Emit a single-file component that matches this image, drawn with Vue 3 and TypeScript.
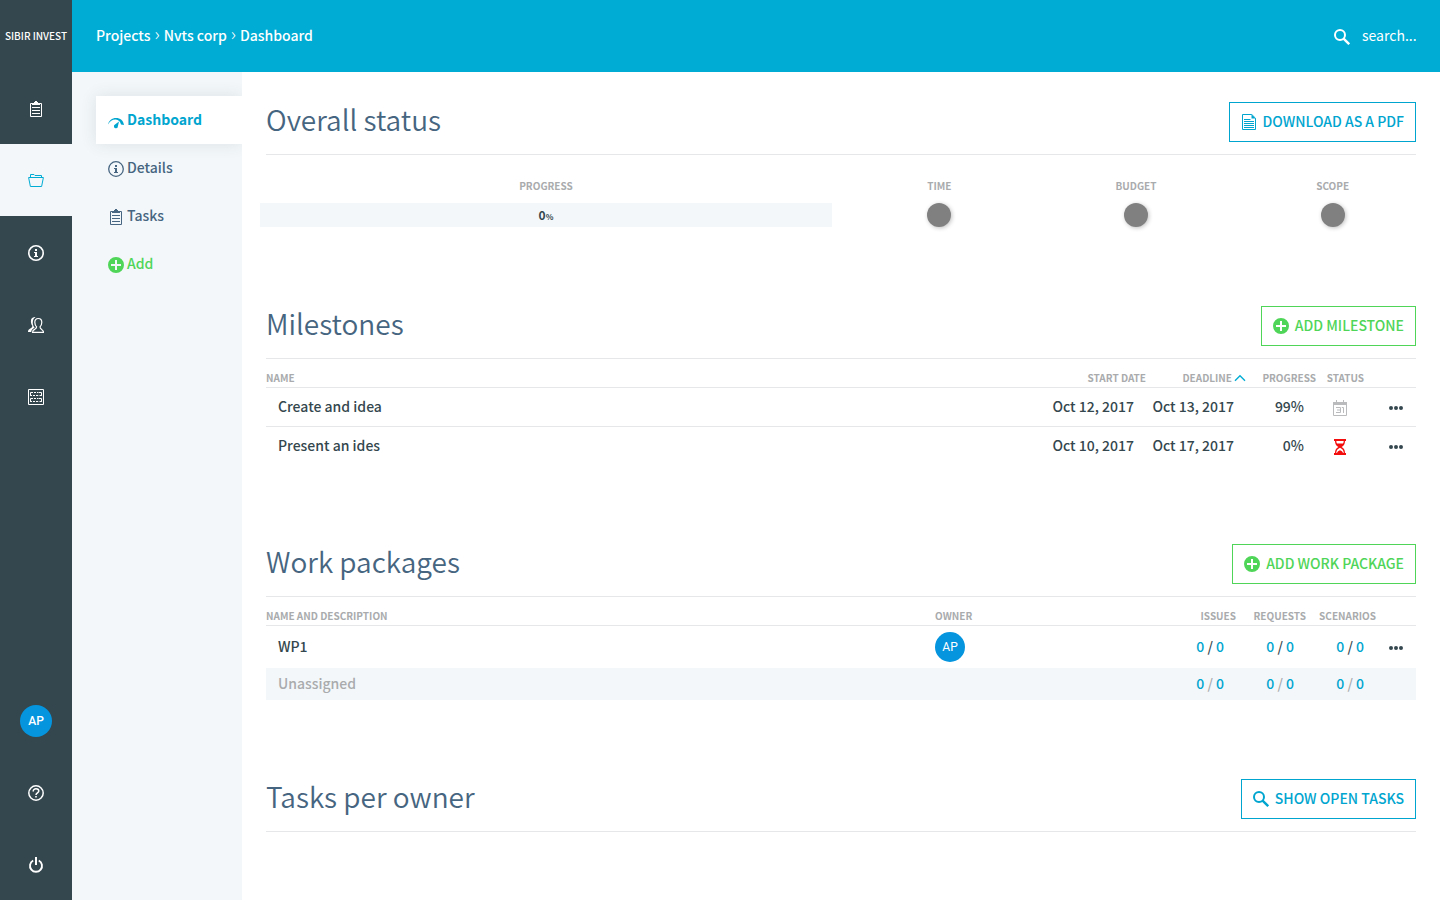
<script setup lang="ts">
import { ref, computed, h, type FunctionalComponent } from 'vue'

interface Shape {
  tag: string
  [attr: string]: string
}

const line = (d: string, w = '1'): Shape => ({ tag: 'path', d, fill: 'none', stroke: 'currentColor', 'stroke-width': w })
const solid = (d: string): Shape => ({ tag: 'path', d, fill: 'currentColor', 'fill-rule': 'evenodd' })
const ring = (r: string, w: string): Shape => ({ tag: 'circle', cx: '8', cy: '8', r, fill: 'none', stroke: 'currentColor', 'stroke-width': w })

const shapes: Record<string, Shape[]> = {
  clipboard: [
    line('M2.5 2.5H13.5V15.5H2.5Z'),
    solid('M4 2H6V1H7V0H9V1H10V2H12V4H4Z'),
    line('M4 6.5H12M4 9.5H12M4 12.5H12'),
  ],
  folder: [
    line('M2.5 4.5V1.5H6L7 2.5H13.5V4.5'),
    line('M0.6 4.5H15.4L13.6 13.5H2.4Z'),
  ],
  info: [ring('7.2', '1.6'), solid('M7 4H9V6H7ZM6 7H9V11H10V12H6V11H7V8H6Z')],
  infoThin: [ring('7.3', '1.3'), solid('M7 4H9V6H7ZM6 7H9V11H10V12H6V11H7V8H6Z')],
  users: [
    solid('M7.6 0C4.6-.2 2.9 1.4 2.9 4.2C2.9 6 3.4 7.6 4.4 8.8C4.3 10.6 3.2 11 1.6 11.9C.4 12.6 0 13.4 0 15H3.2C3.4 12.8 4.6 11.8 6.6 10.8C5.2 9 4.7 7.2 4.8 5.2C4.9 2.8 5.8 1 7.6 0Z'),
    line('M10.3 1.5C7.9 1.5 6.8 3 6.8 5.2C6.8 7.2 7.6 8.8 8.6 9.8C8.6 11.5 7.8 11.8 6.6 12.4C5 13.2 4.5 13.8 4.5 15.4H15.5C15.5 13.8 15 13.2 13.6 12.4C12.4 11.8 12 11.5 12 9.8C13 8.8 13.8 7.2 13.8 5.2C13.8 3 12.7 1.5 10.3 1.5Z', '1.2'),
  ],
  grid: [
    line('M0.5 0.5H15.5V15.5H0.5Z'),
    line('M2.5 6.9V3.5H5M2.5 6.5H4M13.5 6.9V3.5H11M13.5 6.5H12M6 3.5H8M9 3.5H10.5M5 6.5H7M8 6.5H10M10.8 6.5H11.5'),
    line('M2.5 12.9V9.5H5M2.5 12.5H4M13.5 12.9V9.5H11M13.5 12.5H12M6 9.5H8M9 9.5H10.5M5 12.5H7M8 12.5H10M10.8 12.5H11.5'),
  ],
  help: [
    ring('7.2', '1.5'),
    line('M5.2 6.4C5.2 4.7 6.4 3.8 8 3.8C9.6 3.8 10.8 4.7 10.8 6.1C10.8 7.9 8 7.9 8 10', '1.5'),
    solid('M7.2 11H8.8V12.6H7.2Z'),
  ],
  power: [line('M5.2 3.5A6 6 0 1 0 10.8 3.5', '1.9'), line('M8 0V8', '2')],
  gauge: [
    solid('M0 11.6C1 7.4 4 5 8 5C12.2 5 15.4 7.6 16 12L13 11.4C12.4 8.8 10.4 7 7.8 6.6C4.6 6.4 2 8.2 0 11.6Z'),
    solid('M11 8.6L9.9 13.2A2 2 0 1 1 7 11.5Z'),
  ],
  plus: [solid('M8 0A8 8 0 1 1 8 16A8 8 0 1 1 8 0ZM7 3V7H3V9H7V13H9V9H13V7H9V3Z')],
  search: [
    { tag: 'circle', cx: '6', cy: '6', r: '5', fill: 'none', stroke: 'currentColor', 'stroke-width': '2' },
    line('M9.6 9.6L15.2 15.2', '2.4'),
  ],
  document: [
    line('M1.5 0.5H10.8L14.5 4.2V15.5H1.5Z'),
    solid('M10.5 0.5L14.5 4.5H10.5Z'),
    line('M3 5.5H9.5M3 7.5H13M3 9.5H13M3 11.5H13M3 13.5H13'),
  ],
  calendar: [
    line('M1.5 2.5H14.5V15.5H1.5Z'),
    solid('M1 2H15V5H1ZM4 0H5V3H4ZM11 0H12V3H11Z'),
    line('M4 7.5H8.5V12.5H4M5 10H8.5M9.8 7.5H11.5V13', '1'),
  ],
  hourglass: [
    solid('M2 0H14V2H13C13 5 11.8 6.8 9.6 8C11.8 9.2 13 11 13 14H14V16H2V14H3C3 11 4.2 9.2 6.4 8C4.2 6.8 3 5 3 2H2ZM4.3 2C4.3 3.2 4.6 4 5 4.6H11C11.4 4 11.7 3.2 11.7 2ZM4.3 14H5C5.4 12.4 6.6 11.8 8 11.2C9.4 11.8 10.6 12.4 11 14H11.7C11.7 11.6 10.4 9.8 8 8.8C5.6 9.8 4.3 11.6 4.3 14Z'),
  ],
  dots: [solid('M1 8A2 2 0 1 1 5 8A2 2 0 1 1 1 8ZM6 8A2 2 0 1 1 10 8A2 2 0 1 1 6 8ZM11 8A2 2 0 1 1 15 8A2 2 0 1 1 11 8Z')],
}

const Icon: FunctionalComponent<{ name: string }> = (props) =>
  h(
    'svg',
    { width: 16, height: 16, viewBox: '0 0 16 16', 'aria-hidden': 'true' },
    shapes[props.name].map(({ tag, ...attrs }) => h(tag, attrs)),
  )
Icon.props = ['name']

const railTop = [
  { icon: 'clipboard', label: 'My tasks', active: false },
  { icon: 'folder', label: 'Projects', active: true },
  { icon: 'info', label: 'Issues', active: false },
  { icon: 'users', label: 'Users', active: false },
  { icon: 'grid', label: 'Boards', active: false },
]

const sections = [
  { icon: 'gauge', label: 'Dashboard', kind: 'active' },
  { icon: 'infoThin', label: 'Details', kind: '' },
  { icon: 'clipboard', label: 'Tasks', kind: '' },
  { icon: 'plus', label: 'Add', kind: 'add' },
]

const indicators = ['Time', 'Budget', 'Scope']
const progress = ref(0)
const query = ref('')
const ascending = ref(true)

const milestoneList = [
  { name: 'Create and idea', start: 'Oct 12, 2017', deadline: 'Oct 13, 2017', progress: 99, icon: 'calendar', state: 'planned' },
  { name: 'Present an ides', start: 'Oct 10, 2017', deadline: 'Oct 17, 2017', progress: 0, icon: 'hourglass', state: 'late' },
]
const milestones = computed(() => (ascending.value ? milestoneList : [...milestoneList].reverse()))

const packages = [
  { name: 'WP1', owner: 'AP', counts: [[0, 0], [0, 0], [0, 0]] },
  { name: 'Unassigned', owner: '', counts: [[0, 0], [0, 0], [0, 0]] },
]
</script>

<template>
  <div class="app">
    <nav class="rail" aria-label="Main">
      <a href="#" class="brand">SIBIR INVEST</a>
      <a v-for="item in railTop" :key="item.icon" href="#" class="rail-item" :class="{ active: item.active }" :aria-label="item.label">
        <Icon :name="item.icon" />
      </a>
      <div class="rail-space"></div>
      <a href="#" class="rail-item" aria-label="Profile"><span class="avatar">AP</span></a>
      <a href="#" class="rail-item" aria-label="Help"><Icon name="help" /></a>
      <button type="button" class="rail-item" aria-label="Log out"><Icon name="power" /></button>
    </nav>

    <div class="page">
      <header class="topbar">
        <nav class="crumbs" aria-label="Breadcrumb">
          <a href="#">Projects</a><span class="sep">›</span><a href="#">Nvts corp</a><span class="sep">›</span><a href="#">Dashboard</a>
        </nav>
        <label class="search">
          <Icon name="search" />
          <input v-model="query" type="text" placeholder="search..." aria-label="Search" />
        </label>
      </header>

      <div class="body">
        <nav class="subnav" aria-label="Project">
          <a v-for="s in sections" :key="s.label" href="#" class="sub-item" :class="s.kind">
            <Icon :name="s.icon" /><span>{{ s.label }}</span>
          </a>
        </nav>

        <main class="content">
          <section class="status">
            <div class="head">
              <h2>Overall status</h2>
              <button type="button" class="btn blue"><Icon name="document" />DOWNLOAD AS A PDF</button>
            </div>
            <div class="gauges">
              <div class="gauge wide">
                <span class="caption">PROGRESS</span>
                <div class="bar">
                  <div class="fill" :style="{ width: progress + '%' }"></div>
                  <span class="value">{{ progress }}<small>%</small></span>
                </div>
              </div>
              <div v-for="name in indicators" :key="name" class="gauge">
                <span class="caption">{{ name.toUpperCase() }}</span>
                <span class="light"></span>
              </div>
            </div>
          </section>

          <section class="milestones">
            <div class="head">
              <h2>Milestones</h2>
              <button type="button" class="btn green"><Icon name="plus" />ADD MILESTONE</button>
            </div>
            <table>
              <colgroup>
                <col /><col class="w100" /><col class="w100" /><col class="w70" /><col class="w48" /><col class="w52" />
              </colgroup>
              <thead>
                <tr>
                  <th scope="col">NAME</th>
                  <th scope="col" class="num">START DATE</th>
                  <th scope="col" class="num">
                    <button type="button" class="sort" @click="ascending = !ascending">
                      DEADLINE
                      <svg width="12" height="8" viewBox="0 0 12 8" :class="{ flip: !ascending }" aria-hidden="true">
                        <path d="M1 6.7L6 1.7L11 6.7" fill="none" stroke="currentColor" stroke-width="1.4" />
                      </svg>
                    </button>
                  </th>
                  <th scope="col" class="num">PROGRESS</th>
                  <th scope="col" class="num">STATUS</th>
                  <th></th>
                </tr>
              </thead>
              <tbody>
                <tr v-for="m in milestones" :key="m.name">
                  <td>{{ m.name }}</td>
                  <td class="num">{{ m.start }}</td>
                  <td class="num">{{ m.deadline }}</td>
                  <td class="num">{{ m.progress }}%</td>
                  <td class="state" :class="m.state"><Icon :name="m.icon" /></td>
                  <td class="num"><button type="button" class="more" aria-label="More actions"><Icon name="dots" /></button></td>
                </tr>
              </tbody>
            </table>
          </section>

          <section class="packages">
            <div class="head">
              <h2>Work packages</h2>
              <button type="button" class="btn green"><Icon name="plus" />ADD WORK PACKAGE</button>
            </div>
            <table>
              <colgroup>
                <col /><col class="owner-col" /><col class="w70" /><col class="w70" /><col class="w70" /><col class="w40" />
              </colgroup>
              <thead>
                <tr>
                  <th scope="col">NAME AND DESCRIPTION</th>
                  <th scope="col">OWNER</th>
                  <th scope="col" class="num">ISSUES</th>
                  <th scope="col" class="num">REQUESTS</th>
                  <th scope="col" class="num">SCENARIOS</th>
                  <th></th>
                </tr>
              </thead>
              <tbody>
                <tr v-for="p in packages" :key="p.name" :class="{ unassigned: !p.owner }">
                  <td>{{ p.name }}</td>
                  <td class="owner"><span v-if="p.owner" class="avatar small">{{ p.owner }}</span></td>
                  <td v-for="(c, i) in p.counts" :key="i" class="num">
                    <a href="#">{{ c[0] }}</a> / <a href="#">{{ c[1] }}</a>
                  </td>
                  <td class="num"><button v-if="p.owner" type="button" class="more" aria-label="More actions"><Icon name="dots" /></button></td>
                </tr>
              </tbody>
            </table>
          </section>

          <section>
            <div class="head">
              <h2>Tasks per owner</h2>
              <button type="button" class="btn blue"><Icon name="search" />SHOW OPEN TASKS</button>
            </div>
          </section>
        </main>
      </div>
    </div>
  </div>
</template>

<style>
body {
  margin: 0;
  background: #fff;
}
</style>

<style scoped>
.app {
  display: flex;
  min-height: 100vh;
  font-family: "Noto Sans CJK SC", "Open Sans", sans-serif;
  font-size: 14px;
  font-weight: 500;
  line-height: 24px;
  color: #34474e;
}
.app * {
  box-sizing: border-box;
}
a {
  color: inherit;
  text-decoration: none;
}
button,
input {
  margin: 0;
  padding: 0;
  border: 0;
  background: none;
  font: inherit;
  color: inherit;
}
button {
  cursor: pointer;
}
svg {
  display: block;
  flex: none;
}

.rail {
  display: flex;
  flex-direction: column;
  flex: none;
  width: 72px;
  background: #34474e;
  color: #fff;
}
.brand,
.rail-item {
  display: flex;
  align-items: center;
  justify-content: center;
  height: 72px;
}
.brand {
  font-size: 10px;
  white-space: nowrap;
}
.rail-item {
  padding-top: 2px;
}
.rail-item.active {
  background: #f3f7fa;
  color: #00acd4;
}
.rail-space {
  flex: 1;
}
.avatar {
  display: flex;
  align-items: center;
  justify-content: center;
  width: 32px;
  height: 32px;
  border-radius: 50%;
  background: #0595df;
  color: #fff;
  font-family: Roboto, "Liberation Sans", sans-serif;
  font-size: 12px;
}
.avatar.small {
  width: 30px;
  height: 30px;
  font-weight: 400;
}

.page {
  display: flex;
  flex-direction: column;
  flex: 1;
  min-width: 0;
}
.topbar {
  display: flex;
  align-items: center;
  justify-content: space-between;
  height: 72px;
  padding: 0 24px 2px;
  background: #00acd4;
  color: #fff;
}
.sep {
  margin: 0 4px;
  font-size: 18px;
  font-weight: 300;
  line-height: 16px;
}
.search {
  display: flex;
  align-items: center;
  gap: 12px;
}
.search svg {
  margin-top: 4px;
}
.search input {
  width: 54px;
  outline: none;
  font-weight: 400;
}
.search input::placeholder {
  color: #fff;
  opacity: 1;
}

.body {
  display: flex;
  flex: 1;
}
.subnav {
  flex: none;
  width: 170px;
  padding: 24px 0 0 24px;
  overflow: hidden;
  background: #f3f7fa;
  color: #466580;
}
.sub-item {
  display: flex;
  align-items: center;
  gap: 3px;
  height: 48px;
  padding: 0 0 2px 12px;
}
.sub-item svg {
  margin-top: 4px;
}
.sub-item.active {
  background: #fff;
  color: #00a5cf;
  font-weight: 700;
  box-shadow: 0 0 16px rgba(52, 71, 78, 0.12);
}
.sub-item.add {
  color: #4fd558;
}

.content {
  flex: 1;
  min-width: 0;
  padding: 30px 24px 0;
}
.status {
  height: 204px;
}
.milestones {
  height: 238px;
}
.packages {
  height: 235px;
}
.head {
  display: flex;
  justify-content: space-between;
  padding-bottom: 12px;
  border-bottom: 1px solid #e6e7e8;
}
h2 {
  margin: 0;
  color: #466580;
  font-size: 28px;
  font-weight: 350;
  line-height: 34px;
}
.btn {
  display: flex;
  align-items: center;
  gap: 6px;
  height: 40px;
  padding: 0 11px 2px;
  border: 1px solid currentColor;
}
.btn svg {
  margin-top: 2px;
}
.blue {
  color: #00a5cf;
}
.green {
  color: #4fd558;
}

.gauges {
  display: grid;
  grid-template-columns: 3fr 1fr 1fr 1fr;
  margin: 0 -15px;
  padding-top: 23px;
}
.gauge {
  display: flex;
  flex-direction: column;
  align-items: center;
  gap: 9px;
  padding: 0 9px;
}
.caption,
th {
  color: #a9abad;
  font-size: 10px;
  font-weight: 700;
  line-height: 16px;
}
.bar {
  display: grid;
  width: 100%;
  height: 24px;
  background: #f3f7fa;
}
.fill,
.value {
  grid-area: 1 / 1;
}
.fill {
  background: #4fd558;
}
.value {
  text-align: center;
  font-size: 12px;
  font-weight: 700;
}
.value small {
  font-size: 8px;
}
.light {
  width: 24px;
  height: 24px;
  border-radius: 50%;
  background: #808080;
  box-shadow: 1px 1px 4px rgba(0, 0, 0, 0.25);
}

table {
  width: 100%;
  table-layout: fixed;
  border-collapse: separate;
  border-spacing: 0;
}
.w100 {
  width: 100px;
}
.w70 {
  width: 70px;
}
.w52 {
  width: 52px;
}
.w48 {
  width: 48px;
}
.w40 {
  width: 40px;
}
.owner-col {
  width: 231px;
}
th {
  height: 29px;
  padding: 11px 0 1px;
  border-bottom: 1px solid #e6e7e8;
  text-align: left;
  white-space: nowrap;
}
td {
  height: 38px;
  padding: 0 12px 2px;
  white-space: nowrap;
}
.milestones tbody tr:first-child td {
  height: 39px;
  border-bottom: 1px solid #e6e7e8;
}
.num {
  padding-left: 0;
  text-align: right;
}
.sort {
  display: inline-flex;
  align-items: center;
  gap: 2px;
}
.sort svg {
  color: #00acd4;
}
.flip {
  transform: rotate(180deg);
}
.state svg {
  margin-top: 2px;
}
.state {
  padding: 0 16px;
}
.planned {
  color: #b9bbbd;
}
.late {
  color: #f30d0d;
}
.more {
  display: inline-block;
  vertical-align: middle;
}
.packages td {
  height: 42px;
}
.packages td.owner {
  padding: 0;
}
.packages td a {
  color: #00a5cf;
}
.packages .unassigned td {
  height: 32px;
  background: #f3f7fa;
  color: #a9abad;
}
</style>
